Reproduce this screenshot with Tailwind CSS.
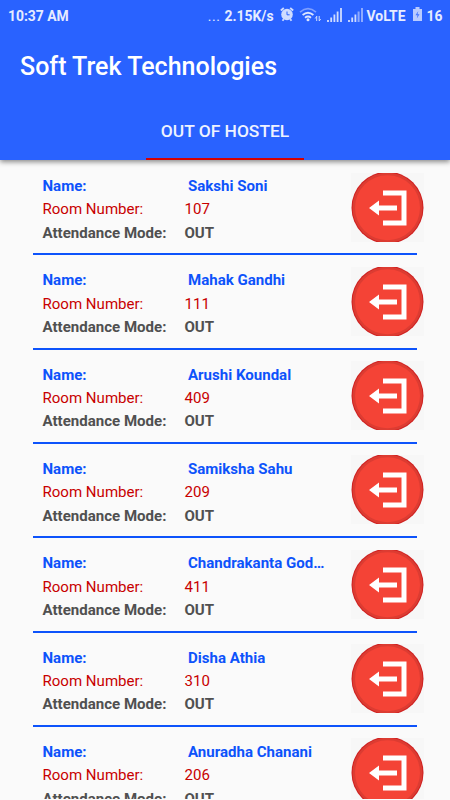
<!DOCTYPE html>
<html lang="en">
<head>
<meta charset="utf-8">
<title>Soft Trek Technologies</title>
<script src="https://cdn.jsdelivr.net/npm/@tailwindcss/browser@4"></script>
</head>
<body class="h-[800px] w-[450px] overflow-hidden bg-[#fafafa] font-['Roboto',sans-serif]">
<div class="flex h-[799px] flex-col overflow-hidden">
  <header class="relative z-10 flex h-[160px] shrink-0 flex-col bg-[#2962ff] text-white shadow-[0_2px_5px_rgba(0,0,0,0.45)]">
    <div class="flex h-8 items-center justify-between pr-[7.5px] pl-2 text-[13.9px] font-bold whitespace-nowrap text-[#e6ecff]">
      <span>10:37 AM</span>
      <div class="flex items-center">
        <span class="mr-1 font-normal tracking-[0.6px]">...</span>
        <span>2.15K/s</span>
        <svg class="-mt-[2px] ml-[6px]" width="14" height="15" viewBox="0 0 14 15"><circle cx="7" cy="7.500" r="5.800" fill="#cfdcff"/><path d="M.8 3.500 3.800 1M13.200 3.500 10.200 1M2.500 13.700l1.300-1.600M11.500 13.700l-1.300-1.600" stroke="#cfdcff" stroke-width="1.800"/><path d="M7 4.500V7.800h2.600" fill="none" stroke="#2962ff" stroke-width="1"/></svg>
        <svg class="-mt-[2px] ml-[5px]" width="22" height="15" viewBox="0 0 22 15"><path d="M1 5.200Q9 -1.800 17 5.200" fill="none" stroke="#7e9fff" stroke-width="1.600"/><path d="M3.600 8Q9 3.400 14.400 8M6 10.800Q9 8.300 12 10.800" fill="none" stroke="#dce5ff" stroke-width="1.800"/><circle cx="9" cy="12.700" r="1.500" fill="#dce5ff"/><path d="M17.700 9v5M20.200 9v5M16.200 11.500l1.500-2M21.700 12l-1.500 2" stroke="#cfdcff" stroke-width="1"/></svg>
        <svg class="-mt-[2px] ml-[6px]" width="16" height="14" viewBox="0 0 16 14"><path d="M1 12v2M4.200 9.500V14M7.400 6.500V14M10.600 3.500V14M14 0v14" stroke="#cfdcff" stroke-width="1.800"/></svg>
        <svg class="-mt-[2px] ml-[5px]" width="16" height="14" viewBox="0 0 16 14"><path d="M1 12v2M4.200 9.500V14M7.400 6.500V14" stroke="#cfdcff" stroke-width="1.800"/><path d="M10.600 3.500V14M14 0v14" stroke="#8eabff" stroke-width="2"/></svg>
        <span class="ml-[3px]">VoLTE</span>
        <svg class="-mt-[3px] ml-[7px]" width="9" height="14" viewBox="0 0 9 14"><path d="M2.500 0h4v2H9v12H0V2h2.500z" fill="#b9cbff"/><path d="M5.300 4 2.500 8.300h2L3.800 11.500 6.500 7.300h-2z" fill="#4475ff"/></svg>
        <span class="ml-[5px]">16</span>
      </div>
    </div>
    <h1 class="flex h-[70px] items-center pl-5 text-[25px] font-medium whitespace-nowrap">Soft Trek Technologies</h1>
    <nav class="flex grow justify-center">
      <div class="flex w-[158px] items-center justify-center border-b-[2px] border-[#d50000] pt-[3px] text-[17.4px] font-medium whitespace-nowrap text-[#eef2ff]">OUT OF HOSTEL</div>
    </nav>
  </header>
  <main id="list" class="flex flex-col pr-8 pl-[33px]"></main>
</div>
<script>
const people = [["Sakshi Soni", 107], ["Mahak Gandhi", 111], ["Arushi Koundal", 409], ["Samiksha Sahu", 209], ["Chandrakanta God…", 411], ["Disha Athia", 310], ["Anuradha Chanani", 206]];
document.getElementById("list").innerHTML = people.map(([name, room]) => `
<section class="relative flex h-[94.33px] w-[384px] shrink-0 pt-[15.1px]">
  <div class="grid h-[70px] grid-cols-[142px_166px] pl-[9.5px] text-[15.06px] leading-[23.2px] whitespace-nowrap">
    <b class="text-[#0d53fb]">Name:</b><b class="pl-[3.5px] text-[#0d53fb]">${name}</b>
    <span class="text-[#c80000]">Room Number:</span><span class="text-[#c80000]">${room}</span>
    <b class="text-[#505050]">Attendance Mode:</b><b class="text-[#505050]">OUT</b>
  </div>
  <svg class="-mt-[2.6px] -mr-[7px] ml-[0.5px] shrink-0" width="73" height="69" viewBox="0 0 73 69">
    <path d="M0 0h73v69H0z" fill="#f7f7f7"/>
    <circle cx="36.500" cy="34.700" r="36" fill="#cf2020"/>
    <circle cx="36.500" cy="34.700" r="35" fill="#dc3c32"/>
    <circle cx="36.500" cy="34.700" r="32.500" fill="#f44336"/>
    <path d="M32 20H53V50H32" fill="none" stroke="#fff" stroke-width="5"/>
    <path d="M18 35 28 27.500V32.500H46V37.500H28V42.500z" fill="#fff"/>
  </svg>
  <div class="absolute inset-x-0 bottom-[-1px] h-[2px] bg-[#0d53fb]"></div>
</section>`).join("");
</script>
</body>
</html>
